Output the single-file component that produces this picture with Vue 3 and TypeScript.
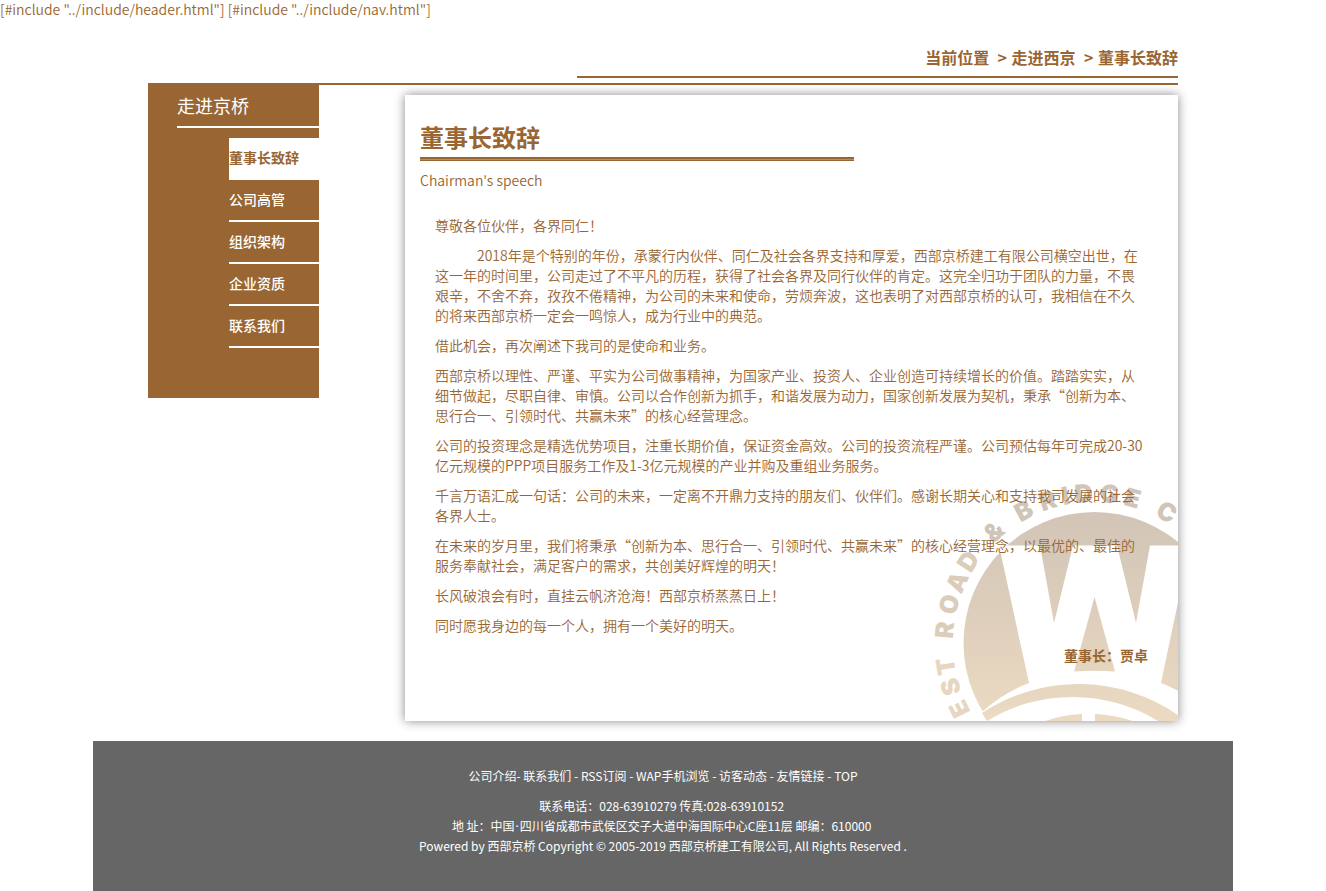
<script setup lang="ts">
interface NavItem {
  label: string
  active?: boolean
}

interface Glyph {
  char: string
  angle: number
}

const navItems: NavItem[] = [
  { label: '董事长致辞', active: true },
  { label: '公司高管' },
  { label: '组织架构' },
  { label: '企业资质' },
  { label: '联系我们' },
]

const footerLinks: { label: string; sep: string }[] = [
  { label: '公司介绍', sep: '- ' },
  { label: '联系我们', sep: ' - ' },
  { label: 'RSS订阅', sep: ' - ' },
  { label: 'WAP手机浏览', sep: ' - ' },
  { label: '访客动态', sep: ' - ' },
  { label: '友情链接', sep: ' - ' },
  { label: 'TOP', sep: '' },
]

const paragraphs: { text: string; indent?: boolean }[] = [
  { text: '尊敬各位伙伴，各界同仁！' },
  {
    indent: true,
    text: '2018年是个特别的年份，承蒙行内伙伴、同仁及社会各界支持和厚爱，西部京桥建工有限公司横空出世，在这一年的时间里，公司走过了不平凡的历程，获得了社会各界及同行伙伴的肯定。这完全归功于团队的力量，不畏艰辛，不舍不弃，孜孜不倦精神，为公司的未来和使命，劳烦奔波，这也表明了对西部京桥的认可，我相信在不久的将来西部京桥一定会一鸣惊人，成为行业中的典范。',
  },
  { text: '借此机会，再次阐述下我司的是使命和业务。' },
  {
    text: '西部京桥以理性、严谨、平实为公司做事精神，为国家产业、投资人、企业创造可持续增长的价值。踏踏实实，从细节做起，尽职自律、审慎。公司以合作创新为抓手，和谐发展为动力，国家创新发展为契机，秉承“创新为本、思行合一、引领时代、共赢未来”的核心经营理念。',
  },
  {
    text: '公司的投资理念是精选优势项目，注重长期价值，保证资金高效。公司的投资流程严谨。公司预估每年可完成20-30亿元规模的PPP项目服务工作及1-3亿元规模的产业并购及重组业务服务。',
  },
  {
    text: '千言万语汇成一句话：公司的未来，一定离不开鼎力支持的朋友们、伙伴们。感谢长期关心和支持我司发展的社会各界人士。',
  },
  {
    text: '在未来的岁月里，我们将秉承“创新为本、思行合一、引领时代、共赢未来”的核心经营理念，以最优的、最佳的服务奉献社会，满足客户的需求，共创美好辉煌的明天！',
  },
  { text: '长风破浪会有时，直挂云帆济沧海！西部京桥蒸蒸日上！' },
  { text: '同时愿我身边的每一个人，拥有一个美好的明天。' },
]

// Seal lettering: each glyph sits on a ring, angle measured clockwise from the top.
const ring: Glyph[] = [
  { char: 'E', angle: -116 },
  { char: 'S', angle: -107 },
  { char: 'T', angle: -99 },
  { char: 'R', angle: -85 },
  { char: 'O', angle: -75 },
  { char: 'A', angle: -66 },
  { char: 'D', angle: -57 },
  { char: '&', angle: -42 },
  { char: 'B', angle: -28 },
  { char: 'R', angle: -18 },
  { char: 'I', angle: -11 },
  { char: 'D', angle: -4 },
  { char: 'G', angle: 6 },
  { char: 'E', angle: 15 },
  { char: 'C', angle: 29 },
]

function ringColor(angle: number): string {
  const a = Math.abs(angle)
  if (a > 90) return '#e7d6c0'
  return a > 50 ? '#dccdbb' : '#d0c5b9'
}
</script>

<template>
  <div class="page">
    <div class="includes">[#include "../include/header.html"] [#include "../include/nav.html"]</div>

    <main class="main">
      <nav class="crumbs" aria-label="当前位置">
        当前位置&nbsp; <span class="sep">&gt;</span> <a href="#">走进西京</a>&nbsp; <span class="sep">&gt;</span> <a href="#">董事长致辞</a>
      </nav>

      <div class="columns">
        <aside class="side">
          <h2 class="side-title">走进京桥</h2>
          <ul class="side-list">
            <li v-for="item in navItems" :key="item.label">
              <a href="#" class="side-link" :class="{ active: item.active }">{{ item.label }}</a>
            </li>
          </ul>
        </aside>

        <article class="card">
          <svg class="seal" viewBox="-16 -13 260 250" aria-hidden="true">
            <defs>
              <linearGradient id="sand" gradientUnits="userSpaceOnUse" x1="0" y1="0" x2="0" y2="237">
                <stop offset="0" stop-color="#cfc3b6" />
                <stop offset="0.5" stop-color="#dccdbb" />
                <stop offset="1" stop-color="#ecdac2" />
              </linearGradient>
              <clipPath id="disc"><circle cx="160.500" cy="159" r="131" /></clipPath>
            </defs>
            <g fill="url(#sand)">
              <g clip-path="url(#disc)">
                <path d="M20 20H300V61.500H216L202 139L183 61.500H139L120 139L106 61.500H20Z" />
                <path d="M66 66L95 199Q69 209 48 228L20 237V66Z" />
                <path d="M160.500 113L181 187.500Q160 186 140 187.500Z" />
                <path d="M255 66L227 199Q238 203 255 213Z" />
              </g>
              <path d="M48 229A175 175 0 0 1 244 231V237H224A164 164 0 0 0 53 237Z" />
              <path d="M111 237Q128 231 148 230V237Z" />
              <path d="M161 230Q181 231 199 237H161Z" />
            </g>
            <g class="ring">
              <text
                v-for="(glyph, i) in ring"
                :key="i"
                x="160"
                y="18"
                :transform="`rotate(${glyph.angle} 160 159)`"
                :fill="ringColor(glyph.angle)"
              >{{ glyph.char }}</text>
            </g>
          </svg>

          <header class="heading">
            <h1>董事长致辞</h1>
            <div class="rule"></div>
            <p class="subtitle">Chairman's speech</p>
          </header>
          <div class="speech">
            <p v-for="(p, i) in paragraphs" :key="i" :class="{ indent: p.indent }">{{ p.text }}</p>
            <p class="sign">董事长：贾卓</p>
          </div>
        </article>
      </div>
    </main>

    <footer class="footer">
      <p class="links"><template v-for="link in footerLinks" :key="link.label"><a href="#">{{ link.label }}</a>{{ link.sep }}</template></p>
      <p>
        联系电话：028-63910279 传真:028-63910152&nbsp;<br />
        地 址：中国<span class="dot">·</span>四川省成都市武侯区交子大道中海国际中心C座11层 邮编：610000&nbsp;<br />
        Powered by <a href="#">西部京桥</a> Copyright © 2005-2019 西部京桥建工有限公司, All Rights Reserved .
      </p>
    </footer>
  </div>
</template>

<style>
body {
  margin: 0;
  background: #fff;
}
</style>

<style scoped>
.page {
  font-family: "Noto Sans CJK SC", sans-serif;
  font-size: 14px;
  font-weight: 350;
  line-height: 20px;
  color: #963;
}

.page *,
.page {
  box-sizing: border-box;
}

a {
  color: inherit;
  text-decoration: none;
}

p,
h1,
h2,
ul {
  margin: 0;
  padding: 0;
}

.includes {
  line-height: 18px;
}

.main {
  width: calc(100% - 40px);
  max-width: 1030px;
  margin: 0 auto;
  padding-top: 29px;
}

.crumbs {
  width: 58.33%;
  margin: 0 0 5px auto;
  padding-bottom: 9px;
  border-bottom: 2px solid #963;
  font-size: 16px;
  font-weight: 700;
  text-align: right;
}

.sep {
  margin: 0 1px;
}

.columns {
  display: grid;
  grid-template-columns: 171fr 773fr;
  column-gap: 86px;
  align-items: start;
  border-top: 2px solid #963;
}

.side {
  padding: 0 0 50px 29px;
  background: #963;
  color: #fff;
}

.side-title {
  padding: 10px 0 11px;
  border-bottom: 2px solid #fff;
  font-size: 18px;
  font-weight: 400;
  line-height: 20px;
}

.side-list {
  margin: 10px 0 0 52px;
  list-style: none;
}

.side-link {
  display: block;
  height: 42px;
  border-bottom: 2px solid #fff;
  font-weight: 500;
  line-height: 38px;
  white-space: nowrap;
}

.side-link.active {
  background: #fff;
  color: #963;
  font-weight: 700;
}

.card {
  position: relative;
  margin: 10px 0 20px;
  padding: 29px 15px 46px;
  background: #fff;
  box-shadow: 0 0 10px #888;
}

.seal {
  position: absolute;
  right: 0;
  bottom: 0;
  width: 260px;
  height: 250px;
}

.ring text {
  font-family: Inter, "Liberation Sans", sans-serif;
  font-size: 25px;
  font-weight: 900;
  text-anchor: middle;
}

.heading,
.speech {
  position: relative;
}

.heading h1 {
  font-size: 24px;
  font-weight: 700;
  line-height: 26px;
}

.rule {
  width: 58.4%;
  height: 4px;
  margin-top: 7px;
  border-top: 2px solid #963;
  border-bottom: 1px solid #963;
  background: #b8905f;
}

.subtitle {
  margin-top: 9px;
}

.speech {
  padding: 25px 15px 0;
}

.speech p {
  margin-bottom: 10px;
}

.speech .indent {
  text-indent: 3em;
}

.speech .sign {
  font-weight: 700;
  text-align: right;
}

.footer {
  width: 100%;
  max-width: 1140px;
  margin: 0 auto;
  padding: 25px 15px 35px;
  background: #666;
  color: #fff;
  font-size: 12px;
  font-weight: 400;
  text-align: center;
}

.links {
  margin-bottom: 10px;
}

.dot {
  margin: 0 1px;
  font-family: "Noto Sans", sans-serif;
  line-height: 0;
}
</style>
